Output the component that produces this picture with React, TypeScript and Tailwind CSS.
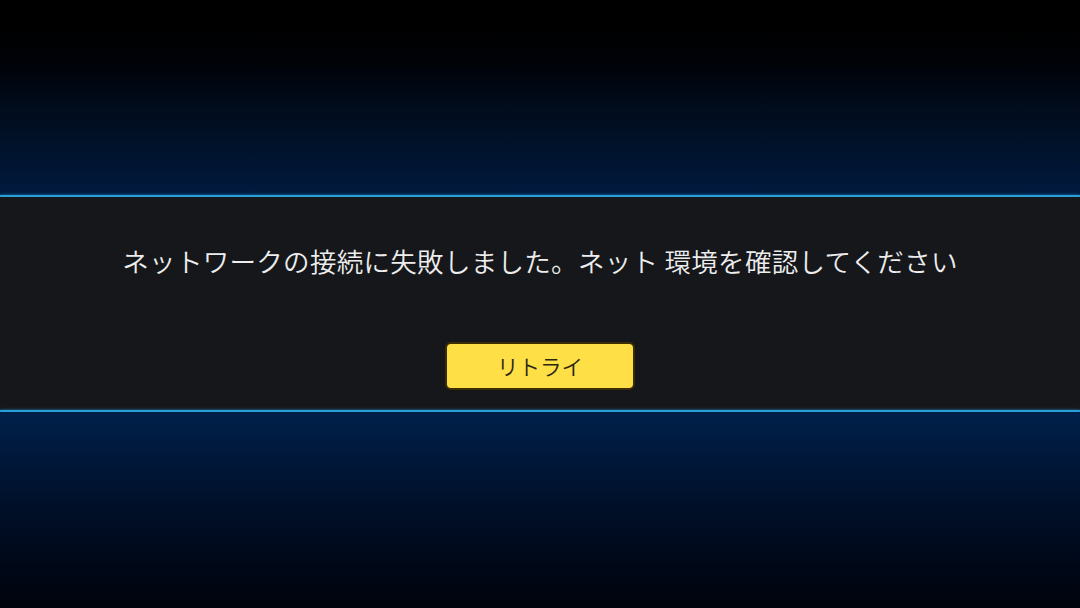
export default function App() {
  const font = { fontFamily: '"Noto Sans CJK JP", "Noto Sans", sans-serif' };
  return (
    <div className="w-[1080px] h-[608px] flex flex-col overflow-hidden bg-black" style={font}>
      <div className="h-[195px] bg-gradient-to-b from-[#000000] via-[#010a18] to-[#001a3e]" />
      <div className="h-[2px] bg-[#2a9fd6] shadow-[0_0_3px_#1e88c8]" />
      <div className="h-[213px] bg-[#15171b] flex flex-col items-center pt-[46px]">
        <div className="text-[26.5px] leading-[36px] font-[350] text-[#ededed] tracking-[0.3px]">
          ネットワークの接続に失敗しました。ネット 環境を確認してください
        </div>
        <button className="mt-[63px] w-[190px] h-[48px] rounded-[6px] bg-[#fedf45] border-2 border-[#3b2e05] text-[21.5px] font-[350] text-[#2a2612] flex items-center justify-center">
          リトライ
        </button>
      </div>
      <div className="h-[2px] bg-[#2a9fd6] shadow-[0_0_3px_#1e88c8]" />
      <div className="flex-1 bg-gradient-to-b from-[#00204a] via-[#000f28] to-[#00040c]" />
    </div>
  );
}
